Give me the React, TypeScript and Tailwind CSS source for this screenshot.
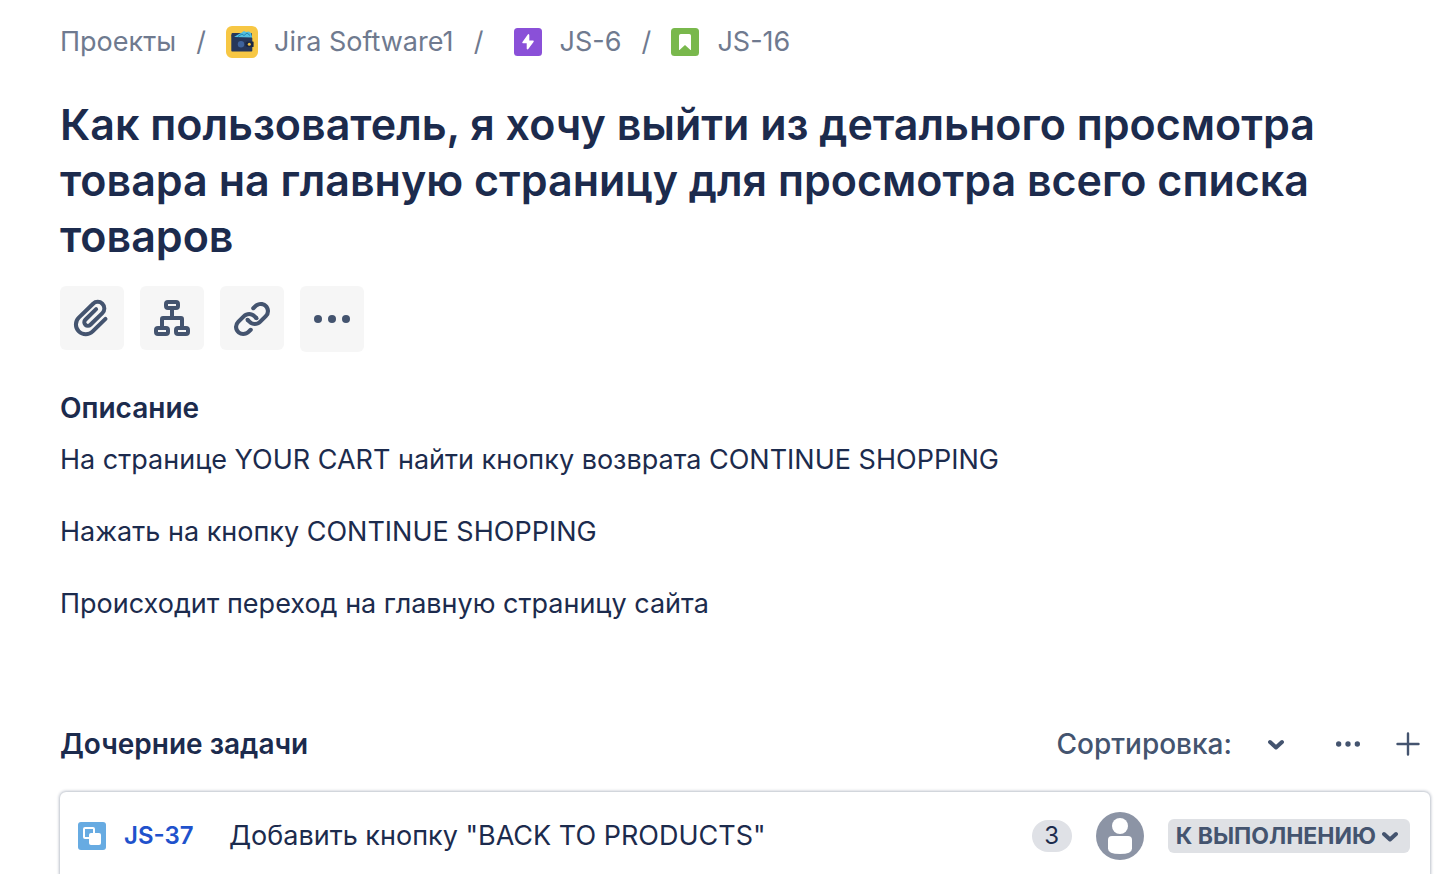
import type { ReactNode } from "react";

function WalletIcon() {
  return (
    <svg className="size-8" viewBox="0 0 32 32" aria-hidden="true">
      <rect width="32" height="32" rx="6" fill="#f7c744" />
      <path d="M5.500 8q0-1 1-1H25q1 0 1 1v4H6z" fill="#27375a" />
      <path d="M8 11l5-3 2-1 3-2 2 1 3-.500 2 1.500 1 3.500v1.500z" fill="#53bfe0" />
      <path d="M12 10.500l4-2.500 2 1.500 3-2.500 3 2.500" stroke="#2287b3" strokeWidth="1" fill="none" />
      <path d="M5.300 8.200q3.200 3.300 5 3.300H25.500q.8 0 .8.800v12.500q0 .8-.8.800H6.100q-.8 0-.8-.8z" fill="#27375a" />
      <path d="M22 15.500h5q.6 0 .6.600v4.300q0 .6-.6.600h-5a2.700 2.700 0 0 1 0-5.500z" fill="#1b2743" />
      <circle cx="15" cy="18.300" r="3.200" fill="#3f639c" />
      <circle cx="23.300" cy="18.300" r="1.500" fill="#f7c744" />
    </svg>
  );
}

function EpicIcon() {
  return (
    <svg className="size-7" viewBox="0 0 28 28" aria-hidden="true">
      <rect width="28" height="28" rx="3.500" fill="#8a50d8" />
      <path
        d="M13.800 6.500L8.300 14.200Q8 15.200 9 15.200H12.700V20.700Q13.200 22.100 14.300 21L19.700 13.700Q20.100 12.400 18.900 12.400H15.300V6.900Q14.800 5.500 13.800 6.500z"
        fill="#fff"
      />
    </svg>
  );
}

function StoryIcon() {
  return (
    <svg className="size-7" viewBox="0 0 28 28" aria-hidden="true">
      <rect width="28" height="28" rx="3.500" fill="#79b84c" />
      <path
        d="M9.800 6h8.400q1.800 0 1.800 1.800v13.600q0 1-.8.300L14 17l-5.200 4.700q-.8.700-.8-.3V7.800Q8 6 9.800 6z"
        fill="#fff"
      />
    </svg>
  );
}

function SubtaskIcon() {
  return (
    <svg className="size-7 shrink-0" viewBox="0 0 28 28" aria-hidden="true">
      <rect width="28" height="28" rx="3" fill="#67abe2" />
      <rect x="6" y="6" width="10" height="10" rx="1" fill="none" stroke="#fff" strokeWidth="2" />
      <rect x="11" y="11" width="12" height="12" rx="2" fill="#fff" />
    </svg>
  );
}

function AttachIcon() {
  return (
    <svg className="size-12" viewBox="0 0 24 24" fill="currentColor" aria-hidden="true">
      <path d="M11.643 17.965c-1.530 1.495-4.016 1.496-5.542.004a3.773 3.773 0 0 1 0-5.412l7.147-6.985a2.316 2.316 0 0 1 3.239-.008 2.280 2.280 0 0 1 0 3.250l-5.985 5.850a.806.806 0 0 1-1.130.004.770.770 0 0 1 0-1.100l5.380-5.260a1 1 0 0 0-1.400-1.430l-5.380 5.260a2.770 2.770 0 0 0 0 3.960 2.799 2.799 0 0 0 3.926-.004l5.985-5.850a4.275 4.275 0 0 0 0-6.110 4.310 4.310 0 0 0-6.037.008l-7.146 6.985a5.773 5.773 0 0 0 0 8.272c2.307 2.255 6.034 2.254 8.340-.004l6.400-6.260a1 1 0 1 0-1.398-1.430l-6.400 6.260z" />
    </svg>
  );
}

function ChildIssueIcon() {
  return (
    <svg className="size-12" viewBox="8 8 48 48" fill="none" stroke="currentColor" strokeWidth="4" aria-hidden="true">
      <rect x="26" y="16" width="12" height="6" rx="2" />
      <rect x="16" y="42" width="12" height="6" rx="2" />
      <rect x="36" y="42" width="12" height="6" rx="2" />
      <path d="M32 23v9M22 41v-8q0-1 1-1h18q1 0 1 1v8" />
    </svg>
  );
}

function LinkIcon() {
  return (
    <svg className="size-12" viewBox="0 0 24 24" fill="currentColor" aria-hidden="true">
      <path d="M12.856 5.457l-.937.920a1.002 1.002 0 0 0 0 1.437 1.047 1.047 0 0 0 1.463 0l.984-.966c.967-.950 2.542-1.135 3.602-.288a2.540 2.540 0 0 1 .203 3.810l-2.903 2.852a2.646 2.646 0 0 1-3.696 0l-1.110-1.090L9 13.570l1.108 1.089c1.822 1.788 4.802 1.788 6.622 0l2.905-2.852a4.558 4.558 0 0 0-.357-6.820c-1.893-1.517-4.695-1.226-6.422.470" />
      <path d="M11.144 19.543l.937-.920a1.002 1.002 0 0 0 0-1.437 1.047 1.047 0 0 0-1.462 0l-.985.966c-.967.950-2.542 1.135-3.602.288a2.540 2.540 0 0 1-.203-3.810l2.903-2.852a2.646 2.646 0 0 1 3.696 0l1.110 1.090L15 11.430l-1.108-1.089c-1.822-1.788-4.802-1.788-6.622 0l-2.905 2.852a4.558 4.558 0 0 0 .357 6.820c1.893 1.517 4.695 1.226 6.422-.470" />
      <circle cx="9.750" cy="12.850" r="1.020" />
      <circle cx="14.250" cy="12.150" r="1.020" />
    </svg>
  );
}

function DotsIcon({ className }: { className: string }) {
  return (
    <svg className={className} viewBox="0 0 48 48" fill="currentColor" aria-hidden="true">
      <circle cx="10" cy="24" r="4" />
      <circle cx="24" cy="24" r="4" />
      <circle cx="38" cy="24" r="4" />
    </svg>
  );
}

function ChevronIcon() {
  return (
    <svg className="size-4" viewBox="0 0 16 16" fill="none" stroke="currentColor" strokeWidth="4" strokeLinecap="round" strokeLinejoin="round" aria-hidden="true">
      <path d="M2 6l6 5.500 6-5.500" />
    </svg>
  );
}

function PlusIcon() {
  return (
    <svg className="size-6" viewBox="0 0 24 24" stroke="currentColor" strokeWidth="2.400" strokeLinecap="round" aria-hidden="true">
      <path d="M12 1.500v21M1.500 12h21" />
    </svg>
  );
}

function Avatar() {
  return (
    <svg className="size-12" viewBox="0 0 48 48" role="img" aria-label="Не назначено">
      <circle cx="24" cy="24" r="24" fill="#8c94a5" />
      <circle cx="24" cy="14" r="8" fill="#fff" />
      <path d="M16 24h16q4 0 4 4v8.500Q36 42 24 42T12 36.500V28q0-4 4-4z" fill="#fff" />
    </svg>
  );
}

function ToolButton({ label, children, tall = false }: { label: string; children: ReactNode; tall?: boolean }) {
  return (
    <button
      type="button"
      aria-label={label}
      className={`flex w-16 items-center justify-center rounded-md bg-[#f6f6f6] text-[#44546f] ${tall ? "h-[66px]" : "h-16"}`}
    >
      {children}
    </button>
  );
}

export default function App() {
  return (
    <main className="overflow-hidden bg-white pt-6 pl-[60px] font-['Inter','Noto_Sans',sans-serif] text-[27px] leading-9 text-[#1c2b4d]">
      <nav aria-label="Навигация" className="flex items-center text-[#6f7a8f]">
        <a href="#projects">Проекты</a>
        <span className="w-[50px] text-center">/</span>
        <a href="#project" className="flex items-center gap-4">
          <WalletIcon />
          Jira Software1
        </a>
        <span className="mr-2.5 w-[50px] text-center">/</span>
        <a href="#JS-6" className="flex items-center gap-[18px]">
          <EpicIcon />
          JS-6
        </a>
        <span className="w-[50px] text-center">/</span>
        <a href="#JS-16" className="flex items-center gap-[18px]">
          <StoryIcon />
          JS-16
        </a>
      </nav>

      <h1 className="mt-9 pr-20 text-[43px] leading-14 font-semibold">
        Как пользователь, я хочу выйти из детального просмотра товара на главную страницу для просмотра всего списка
        товаров
      </h1>

      <div className="mt-[22px] flex items-start gap-4">
        <ToolButton label="Прикрепить">
          <AttachIcon />
        </ToolButton>
        <ToolButton label="Добавить дочернюю задачу">
          <ChildIssueIcon />
        </ToolButton>
        <ToolButton label="Связать задачу">
          <LinkIcon />
        </ToolButton>
        <ToolButton label="Ещё" tall>
          <DotsIcon className="size-12" />
        </ToolButton>
      </div>

      <section className="mt-[38px]">
        <h2 className="text-[28px] font-semibold">Описание</h2>
        <div className="mt-4 flex flex-col gap-9">
          <p>На странице YOUR CART найти кнопку возврата CONTINUE SHOPPING</p>
          <p>Нажать на кнопку CONTINUE SHOPPING</p>
          <p>Происходит переход на главную страницу сайта</p>
        </div>
      </section>

      <section className="mt-[104px]">
        <header className="flex items-center pr-6 text-[28px] text-[#44546f]">
          <h2 className="flex-1 font-semibold text-[#1c2b4d]">Дочерние задачи</h2>
          <button type="button" className="flex items-center gap-9 font-medium">
            Сортировка:
            <ChevronIcon />
          </button>
          <button type="button" aria-label="Действия" className="ml-12">
            <DotsIcon className="size-8" />
          </button>
          <button type="button" aria-label="Создать" className="ml-8">
            <PlusIcon />
          </button>
        </header>
        <ul className="mt-[30px] mr-3.5">
          <li className="flex h-[88px] items-center rounded-md pr-5 pl-[18px] shadow-[0_0_3px_1px_rgba(9,30,66,0.28)]">
            <SubtaskIcon />
            <a href="#JS-37" className="ml-[18px] w-[105px] text-2xl font-semibold text-[#1f52cc]">
              JS-37
            </a>
            <span className="flex-1">Добавить кнопку "BACK TO PRODUCTS"</span>
            <span className="flex h-8 w-10 items-center justify-center rounded-full bg-[#dfe1e6] text-2xl">3</span>
            <span className="ml-6">
              <Avatar />
            </span>
            <button
              type="button"
              className="ml-6 flex h-[34px] items-center gap-1.5 rounded-md bg-[#dfe1e5] pr-3 pl-2 text-[23px] font-bold text-[#44546f]"
            >
              К ВЫПОЛНЕНИЮ
              <ChevronIcon />
            </button>
          </li>
        </ul>
      </section>
    </main>
  );
}
